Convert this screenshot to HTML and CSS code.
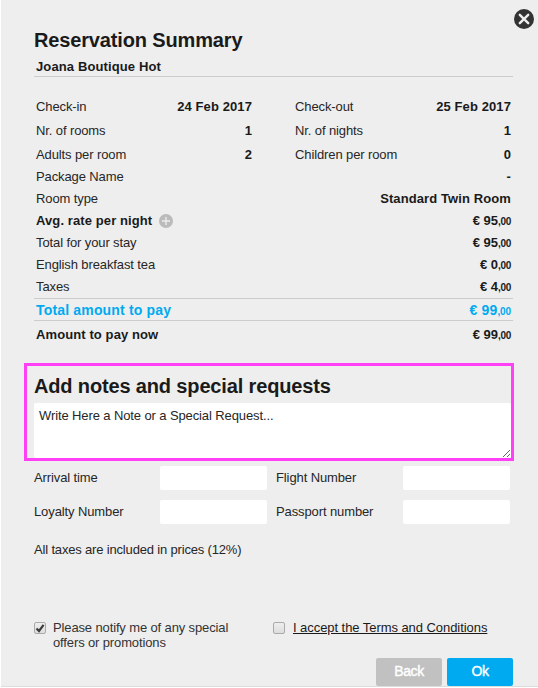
FILE: index.html
```html
<!DOCTYPE html>
<html lang="en">
<head>
  <meta charset="UTF-8">
  <meta name="viewport" content="width=device-width, initial-scale=1.0">
  <title>Reservation Summary</title>
  <link rel="stylesheet" href="styles.css">
</head>
<body>
  <div class="modal">
    <a class="close" href="#" aria-label="Close">
      <svg width="20" height="20" viewBox="0 0 20 20">
        <circle cx="10" cy="10" r="10" fill="#333"/>
        <path d="M5.8 5.8 L14.2 14.2 M14.2 5.8 L5.8 14.2" stroke="#eee" stroke-width="2.4" stroke-linecap="round"/>
      </svg>
    </a>

    <h1>Reservation Summary</h1>
    <h2 class="hotel">Joana Boutique Hot</h2>

    <div class="stay">
      <div class="row"><span>Check-in</span><b>24 Feb 2017</b></div>
      <div class="row"><span>Check-out</span><b>25 Feb 2017</b></div>
      <div class="row"><span>Nr. of rooms</span><b>1</b></div>
      <div class="row"><span>Nr. of nights</span><b>1</b></div>
      <div class="row"><span>Adults per room</span><b>2</b></div>
      <div class="row"><span>Children per room</span><b>0</b></div>
    </div>

    <div class="prices">
      <div class="row"><span>Package Name</span><b>-</b></div>
      <div class="row"><span>Room type</span><b>Standard Twin Room</b></div>
      <div class="row">
        <b class="avg">Avg. rate per night
          <svg width="14" height="14" viewBox="0 0 14 14">
            <circle cx="7" cy="7" r="7" fill="#bbb"/>
            <path d="M7 3 V11 M3 7 H11" stroke="#eee" stroke-width="1.3"/>
          </svg>
        </b>
        <b class="price">€ 95<small>,00</small></b>
      </div>
      <div class="row"><span>Total for your stay</span><b class="price">€ 95<small>,00</small></b></div>
      <div class="row"><span>English breakfast tea</span><b class="price">€ 0<small>,00</small></b></div>
      <div class="row"><span>Taxes</span><b class="price">€ 4<small>,00</small></b></div>
    </div>
    <div class="row total"><b>Total amount to pay</b><b class="price">€ 99<small>,00</small></b></div>
    <div class="row now"><b>Amount to pay now</b><b class="price">€ 99<small>,00</small></b></div>

    <div class="notes">
      <h1>Add notes and special requests</h1>
      <textarea>Write Here a Note or a Special Request...</textarea>
    </div>

    <div class="fields">
      <label for="arrival">Arrival time</label><input type="text" id="arrival">
      <label for="flight">Flight Number</label><input type="text" id="flight">
      <label for="loyalty">Loyalty Number</label><input type="text" id="loyalty">
      <label for="passport">Passport number</label><input type="text" id="passport">
    </div>

    <p class="taxes">All taxes are included in prices (12%)</p>

    <div class="checks">
      <label class="check">
        <input type="checkbox" checked>
        <span class="box"><svg width="10" height="10" viewBox="0 0 10 10"><path d="M1.5 5.5 L4 8 L8.6 1.8" fill="none" stroke="#3c3c3c" stroke-width="2.2"/></svg></span>
        <span class="notify">Please notify me of any special<br>offers or promotions</span>
      </label>
      <label class="check">
        <input type="checkbox">
        <span class="box"></span>
        <a class="terms" href="#">I accept the Terms and Conditions</a>
      </label>
    </div>

    <div class="buttons">
      <button class="back">Back</button>
      <button class="ok">Ok</button>
    </div>
  </div>
</body>
</html>
```

FILE: styles.css
```css
* {
  box-sizing: border-box;
}
body {
  margin: 0;
  background: white;
  color: #262626;
  font-family: "Helvetica Neue", "Liberation Sans", Arial, sans-serif;
  font-size: 13px;
  font-weight: 300;
  letter-spacing: -0.11px;
  overflow: hidden;
}
.modal {
  position: relative;
  height: 687px;
  margin-left: 1px;
  padding: 28px 25px 0 33px;
  background: #eee;
  border-bottom: 1px solid #ddd;
}
.close {
  position: absolute;
  top: 9px;
  right: 4px;
  height: 20px;
}
.close svg {
  display: block;
}
h1 {
  margin: 0;
  color: #1a1a1a;
  font-size: 20px;
  line-height: 24px;
  font-weight: bold;
  letter-spacing: -0.15px;
  white-space: nowrap;
}
b {
  color: #1a1a1a;
  font-weight: bold;
  letter-spacing: 0.1px;
}
.hotel {
  margin: 0 0 17px;
  padding: 5px 2px 0;
  height: 25px;
  color: #1a1a1a;
  font-size: 13px;
  line-height: 20px;
  letter-spacing: 0.12px;
  border-bottom: 1px solid #ccc;
}
.row {
  display: flex;
  justify-content: space-between;
  padding: 1px 2px 0;
  line-height: 22px;
  height: 22px;
}
.stay {
  display: grid;
  grid-template-columns: 220px 220px;
  justify-content: space-between;
}
.stay .row {
  height: 24px;
  line-height: 24px;
}
.prices {
  margin-top: -1px;
  height: 133px;
}
.avg {
  display: flex;
  align-items: center;
  gap: 7px;
}
.price {
  letter-spacing: 0;
}
small {
  font-size: 10px;
  letter-spacing: -0.3px;
}
.total {
  height: 23px;
  padding-top: 0;
  font-size: 14px;
  border-top: 1px solid #ccc;
  border-bottom: 1px solid #ccc;
}
.total b {
  color: #00aaf0;
  letter-spacing: 0.17px;
}
.total small {
  letter-spacing: -0.1px;
}
.now {
  height: 26px;
  line-height: 26px;
}
.notes {
  width: 490px;
  height: 98px;
  margin: 16px 0 5px -10px;
  padding: 8px 0 0 7px;
  border: 3px solid #ff40f5;
}
textarea {
  display: block;
  width: 477px;
  height: 55px;
  margin-top: 5px;
  padding: 5px 5px 3px;
  border: 0;
  border-radius: 2px;
  outline: 0;
  color: inherit;
  font: inherit;
  letter-spacing: inherit;
  line-height: 16px;
  resize: vertical;
}
.fields {
  display: grid;
  grid-template-columns: 126px 107px 136px 107px;
  row-gap: 10px;
}
.fields label {
  line-height: 23px;
}
.fields label:nth-of-type(even) {
  padding-left: 9px;
}
.fields input {
  width: 107px;
  height: 24px;
  border: 0;
  border-radius: 2px;
}
.taxes {
  margin: 18px 0 0;
  line-height: 16px;
  letter-spacing: -0.17px;
}
.checks {
  display: flex;
  margin-top: 62px;
  height: 38px;
}
.check {
  display: flex;
  width: 239px;
  line-height: 15px;
}
.check input {
  display: none;
}
.box {
  width: 12px;
  height: 12px;
  margin: 2px 7px 0 0;
  border: 1px solid #aaa;
  border-radius: 2px;
  background: linear-gradient(#eee, #ddd);
  flex: none;
}
.box svg {
  display: block;
}
.notify {
  color: #333;
  letter-spacing: -0.13px;
}
.terms {
  margin-left: 1px;
  color: #1a1a1a;
  letter-spacing: -0.06px;
}
.buttons {
  display: flex;
  justify-content: flex-end;
  gap: 5px;
}
button {
  width: 66px;
  height: 28px;
  padding: 0 0 2px;
  border: 0;
  border-radius: 2px;
  background: #c1c1c1;
  color: white;
  font-family: inherit;
  font-size: 14px;
  letter-spacing: -0.4px;
  -webkit-text-stroke: 0.4px white;
}
.ok {
  background: #00aaf0;
}
```
